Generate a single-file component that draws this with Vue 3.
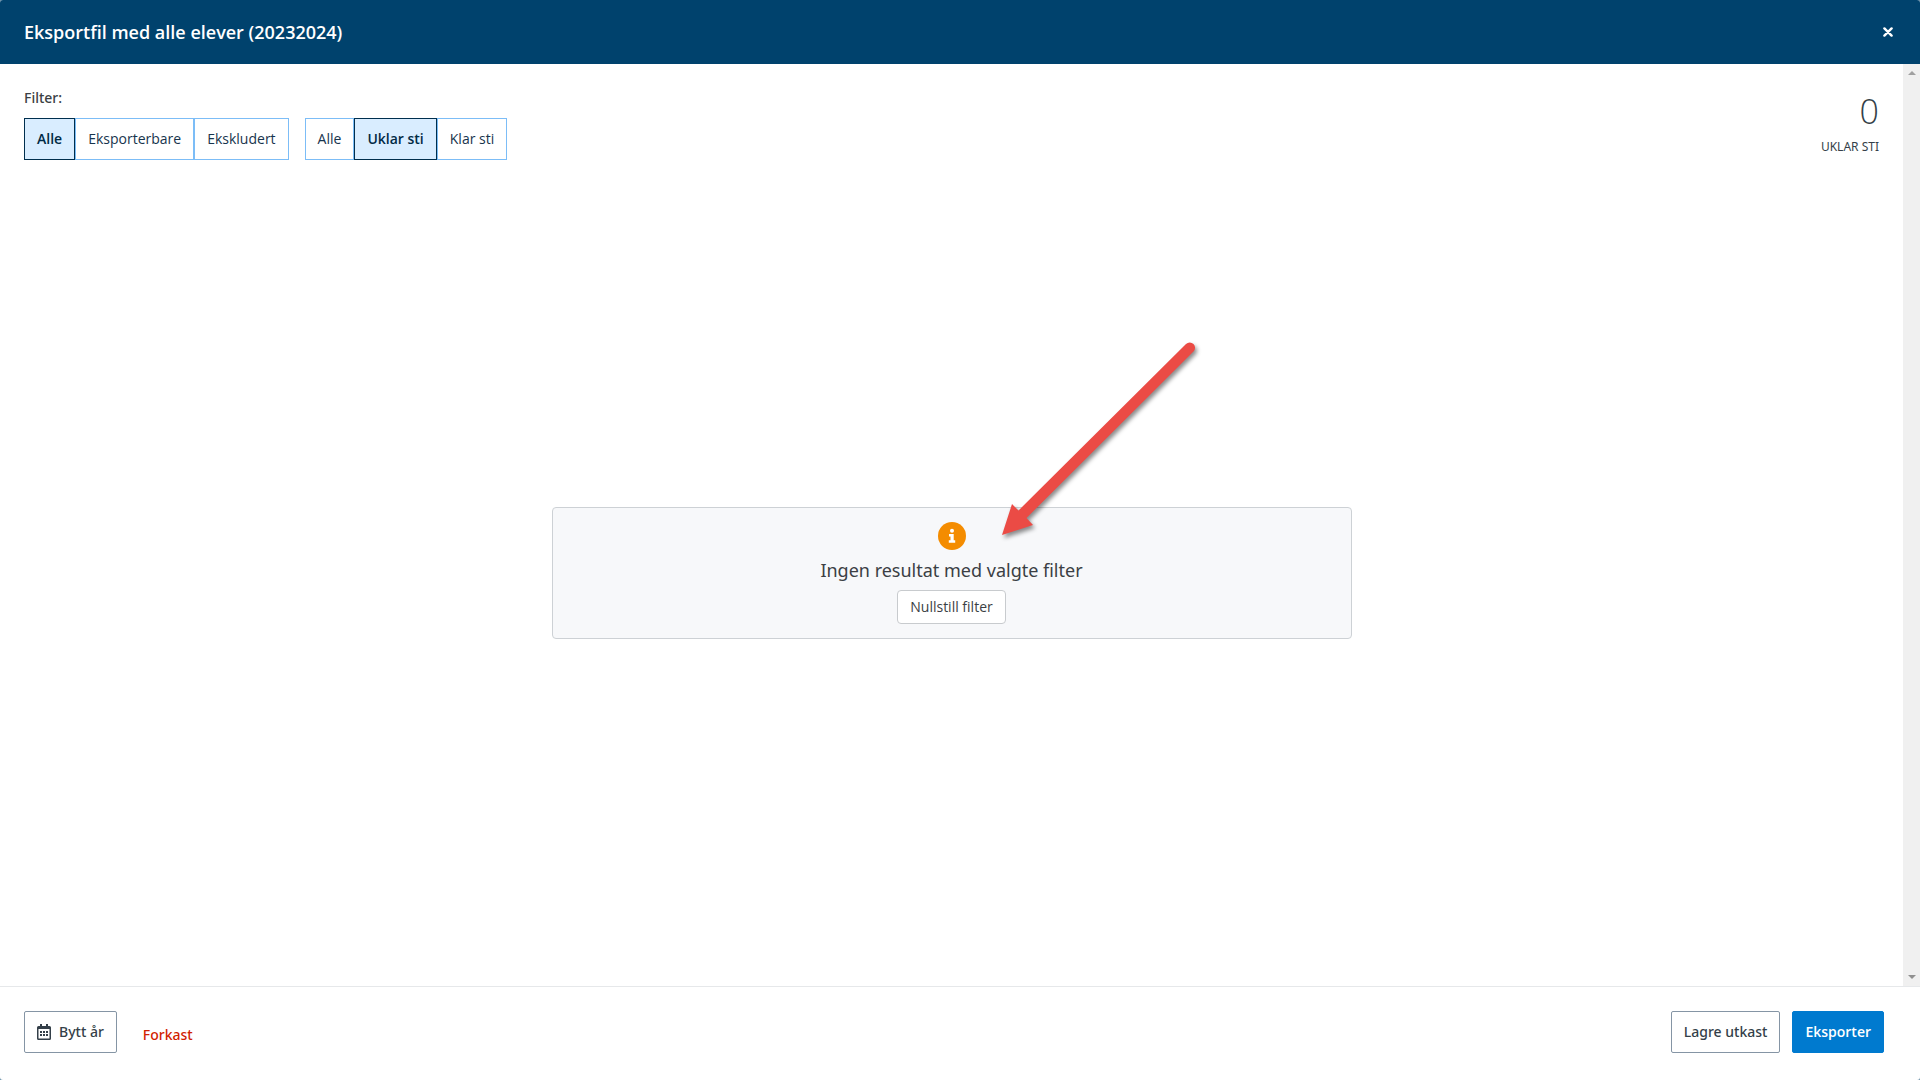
<script setup>
import { ref, computed } from 'vue';

const exportFilters = ['Alle', 'Eksporterbare', 'Ekskludert'];
const pathFilters = ['Alle', 'Uklar sti', 'Klar sti'];

const exportFilter = ref('Alle');
const pathFilter = ref('Uklar sti');
const count = ref(0);

const countLabel = computed(() => (pathFilter.value === 'Alle' ? 'Elever' : pathFilter.value));

const resetFilters = () => {
  exportFilter.value = 'Alle';
  pathFilter.value = 'Alle';
};
</script>

<template>
  <div class="modal">
    <header class="header">
      <h1>Eksportfil med alle elever (20232024)</h1>
      <button type="button" class="close" aria-label="Lukk">
        <svg width="10" height="10" viewBox="0 0 10 10">
          <path d="M1.4 1.4 8.6 8.6M8.6 1.4 1.4 8.6" stroke="#fff" stroke-width="2.4" stroke-linecap="round" />
        </svg>
      </button>
    </header>

    <div class="body">
      <main class="content">
        <div class="top">
          <div class="filters">
            <div class="label">Filter:</div>
            <div class="groups">
              <div class="group">
                <button
                  v-for="f in exportFilters"
                  :key="f"
                  type="button"
                  :class="{ active: f === exportFilter }"
                  @click="exportFilter = f"
                >{{ f }}</button>
              </div>
              <div class="group">
                <button
                  v-for="f in pathFilters"
                  :key="f"
                  type="button"
                  :class="{ active: f === pathFilter }"
                  @click="pathFilter = f"
                >{{ f }}</button>
              </div>
            </div>
          </div>
          <div class="counter">
            <div class="number">{{ count }}</div>
            <div class="caption">{{ countLabel }}</div>
          </div>
        </div>

        <div class="empty">
          <div class="notice">
            <svg class="info" width="28" height="28" viewBox="0 0 28 28">
              <circle cx="14" cy="14" r="14" fill="#f48c00" />
              <circle cx="14" cy="8.7" r="2" fill="#fff" />
              <path d="M11 12h4.7v6.3h1.5v2.4h-6.4v-2.4h1.7v-3.9H11z" fill="#fff" />
            </svg>
            <p>Ingen resultat med valgte filter</p>
            <button type="button" class="reset" @click="resetFilters">Nullstill filter</button>
            <svg class="arrow" width="220" height="220" viewBox="0 0 220 220">
              <path
                d="M10 198 20 167 26.5 173.500 194 7A5.200 5.200 0 0 1 201.500 14.500L34.500 181 41 188Z"
                fill="#eb4b45"
              />
            </svg>
          </div>
        </div>
      </main>
      <div class="scrollbar" aria-hidden="true">
        <svg width="8" height="4" viewBox="0 0 8 4"><path d="M0 4 4 0 8 4z" fill="#a0a0a0" /></svg>
        <svg width="8" height="4" viewBox="0 0 8 4"><path d="M0 0 4 4 8 0z" fill="#909090" /></svg>
      </div>
    </div>

    <footer class="footer">
      <button type="button" class="btn">
        <svg width="14" height="16" viewBox="0 0 14 16" fill="#343f49">
          <path fill-rule="evenodd" d="M3 0h2v2h4V0h2v2h1.500A1.500 1.500 0 0 1 14 3.500v11a1.500 1.500 0 0 1-1.500 1.500h-11A1.500 1.500 0 0 1 0 14.500v-11A1.500 1.500 0 0 1 1.500 2H3zM1.500 5v9.500h11V5z" />
          <path d="M3 7h2v2H3zM6 7h2v2H6zM9 7h2v2H9zM3 10h2v2H3zM6 10h2v2H6zM9 10h2v2H9z" />
        </svg>
        Bytt år
      </button>
      <button type="button" class="discard">Forkast</button>
      <div class="spacer"></div>
      <button type="button" class="btn">Lagre utkast</button>
      <button type="button" class="btn primary">Eksporter</button>
    </footer>
  </div>
</template>

<style>
body {
  margin: 0;
  background: #6f93ab;
}
</style>

<style scoped>
.modal {
  display: flex;
  flex-direction: column;
  min-height: 100vh;
  border-radius: 3px;
  overflow: hidden;
  background: #fff;
  color: #3b3f44;
  font-family: "Open Sans", "Noto Sans", sans-serif;
  font-size: 14px;
  line-height: 20px;
}
button {
  box-sizing: border-box;
  margin: 0;
  font: inherit;
  cursor: pointer;
}
.header {
  display: flex;
  align-items: center;
  justify-content: space-between;
  height: 64px;
  padding: 0 24px;
  background: #00426d;
}
.header h1 {
  margin: 0;
  color: #fff;
  font-size: 18px;
  line-height: 24px;
  font-weight: 600;
}
.close {
  display: flex;
  padding: 3px;
  border: none;
  background: none;
}
.body {
  display: flex;
  flex: 1;
}
.content {
  display: flex;
  flex: 1;
  flex-direction: column;
}
.top {
  display: flex;
  justify-content: space-between;
  height: 96px;
  padding: 0 24px;
}
.label {
  margin: 24px 0 10px;
  font-family: "Noto Sans", sans-serif;
  font-weight: 500;
}
.groups {
  display: flex;
  gap: 16px;
}
.group {
  display: flex;
}
.group button {
  height: 42px;
  padding: 0 12px;
  border: 1px solid #7cbdf7;
  background: #fff;
  color: #17344d;
}
.group button.active {
  border-color: #002f4e;
  background: #d9edff;
  color: #002a45;
  font-weight: 600;
}
.counter {
  padding-top: 24px;
  text-align: right;
  color: #343f49;
}
.number {
  font-size: 34px;
  line-height: 46px;
  font-weight: 300;
}
.caption {
  font-family: "Noto Sans", sans-serif;
  font-size: 12px;
  line-height: 26px;
  text-transform: uppercase;
}
.empty {
  display: flex;
  flex: 1;
  align-items: center;
  justify-content: center;
}
.notice {
  position: relative;
  display: flex;
  flex-direction: column;
  align-items: center;
  box-sizing: border-box;
  width: 800px;
  max-width: 100%;
  padding: 14px;
  border: 1px solid #cdd1d5;
  border-radius: 4px;
  background: #f7f8fa;
}
.notice p {
  margin: 8px 0;
  font-family: "Noto Sans", sans-serif;
  font-size: 18px;
  line-height: 24px;
}
.reset {
  height: 34px;
  padding: 0 12px;
  border: 1px solid #c8cbce;
  border-radius: 4px;
  background: #fff;
  color: #3b3f44;
}
/* pointer laid over the notice */
.arrow {
  position: absolute;
  top: -171px;
  left: 439px;
  filter: drop-shadow(2px 3px 2px rgba(0, 0, 0, 0.45));
  pointer-events: none;
}
.scrollbar {
  display: flex;
  flex-direction: column;
  align-items: center;
  justify-content: space-between;
  box-sizing: border-box;
  width: 17px;
  padding: 7px 0;
  background: #f0f0f0;
}
.footer {
  display: flex;
  align-items: center;
  gap: 12px;
  box-sizing: border-box;
  height: 94px;
  padding: 0 36px 4px 24px;
  border-top: 1px solid #e6e8ea;
  font-family: "Noto Sans", sans-serif;
}
.btn {
  display: flex;
  align-items: center;
  gap: 8px;
  height: 42px;
  padding: 0 12px;
  border: 1px solid #8595a5;
  border-radius: 2px;
  background: #fff;
  color: #343f49;
  font-weight: 500;
}
.btn.primary {
  border-color: #007acf;
  background: #007acf;
  color: #fff;
  font-family: "Open Sans", sans-serif;
  font-weight: 600;
}
.discard {
  padding: 6px 14px 0;
  border: none;
  background: none;
  color: #d12200;
  font-weight: 500;
}
.spacer {
  flex: 1;
}
</style>
